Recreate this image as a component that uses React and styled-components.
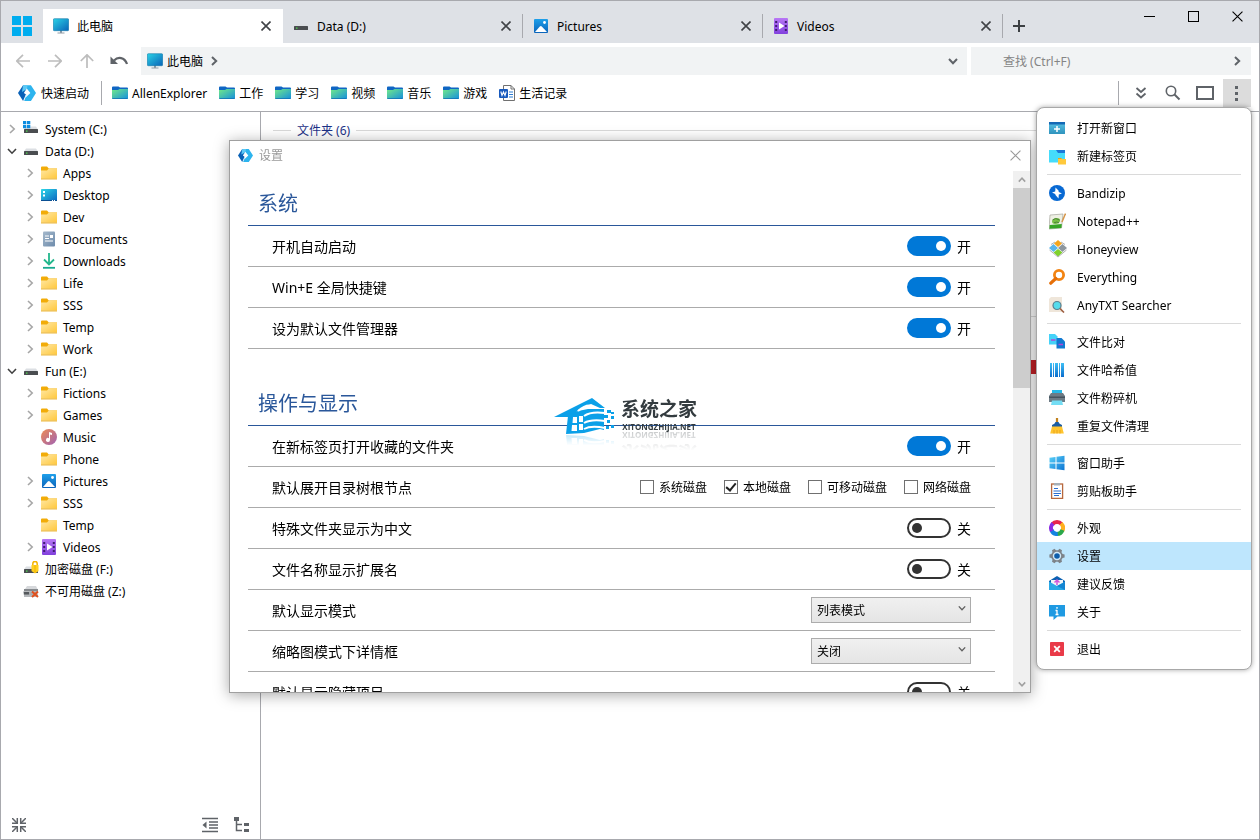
import React, { useState } from 'react';
import styled, { createGlobalStyle } from 'styled-components';

const GlobalStyle = createGlobalStyle`
  * {
    box-sizing: border-box;
  }

  body {
    margin: 0;
    background-color: #fff;
    overflow: hidden;
  }

  body, button, input, select {
    font-family: "Noto Sans", "Noto Sans CJK SC", sans-serif;
    font-size: 12px;
    line-height: 21px;
    color: #000;
  }

  button {
    border: 0;
    padding: 0;
    background: none;
    cursor: pointer;
  }

  svg {
    display: block;
    flex-shrink: 0;
  }
`;

const Window = styled.div`
  height: 100vh;
  display: flex;
  flex-direction: column;
  border: 1px solid #a8a9ae;
`;

const TitleBar = styled.header`
  display: flex;
  align-items: flex-start;
  height: 42px;
  background-color: #dee1e6;
`;

const StartButton = styled.button`
  display: flex;
  justify-content: center;
  width: 42px;
  padding-top: 15px;
`;

const Tabs = styled.nav`
  display: flex;
  flex: 1;
  padding-top: 8px;
`;

const Tab = styled.div`
  display: flex;
  align-items: center;
  width: 240px;
  height: 34px;
  padding: 0 9px 0 10px;
  background-color: ${props => props.$active ? '#fff' : 'transparent'};
`;

const TabLabel = styled.button`
  display: flex;
  align-items: center;
  flex: 1;
  gap: 8px;
`;

const TabDivider = styled.span`
  width: 1px;
  height: 24px;
  margin-left: -1px;
  align-self: center;
  background-color: #a8a9ae;
`;

const IconButton = styled.button`
  display: flex;
  align-items: center;
  justify-content: center;
  width: ${props => props.$width || 28}px;
  height: ${props => props.$height || 28}px;
  color: ${props => props.$color || '#5f6368'};
  background-color: ${props => props.$pressed ? '#dcdcdc' : 'transparent'};
`;

const WindowButtons = styled.div`
  display: flex;
`;

const AddressRow = styled.div`
  display: flex;
  align-items: center;
  height: 36px;
  padding: 0 8px 0 6px;
`;

const PathBox = styled.div`
  display: flex;
  align-items: center;
  justify-content: space-between;
  flex: 1;
  height: 28px;
  margin: 0 4px 0 6px;
  padding-left: 6px;
  background-color: #f1f3f4;
`;

const Crumb = styled.button`
  display: flex;
  align-items: center;
  gap: 4px;

  svg:last-child {
    margin-left: 2px;
    color: #5f6368;
  }
`;

const SearchBox = styled.div`
  display: flex;
  width: 280px;
  height: 28px;
  background-color: #f1f3f4;

  input {
    flex: 1;
    min-width: 0;
    border: 0;
    padding: 1px 0 0 32px;
    background: none;
  }

  input::placeholder {
    color: #858585;
  }
`;

const BookmarkRow = styled.div`
  display: flex;
  align-items: flex-start;
  height: 33px;
  padding: 0 8px 0 17px;
  border-bottom: 1px solid #a8a9ae;
`;

const Bookmarks = styled.nav`
  display: flex;
  align-items: center;
  flex: 1;
  gap: 12px;
  height: 28px;
`;

const Bookmark = styled.button`
  display: flex;
  align-items: center;
  gap: ${props => props.$gap || 4}px;
  white-space: nowrap;
`;

const BarDivider = styled.span`
  width: 1px;
  height: 24px;
  margin-right: ${props => props.$after}px;
  background-color: #a8a9ae;
`;

const Tools = styled.div`
  display: flex;
  align-items: center;
  gap: 4px;
`;

const MenuAnchor = styled.div`
  position: relative;
`;

const Menu = styled.div`
  position: absolute;
  z-index: 3;
  top: 100%;
  right: -1px;
  width: 216px;
  padding: 6px 0;
  border: 1px solid #a8a8a8;
  border-radius: 8px;
  background-color: #fff;
  box-shadow: 0 0 5px rgba(0, 0, 0, 0.35);

  hr {
    height: 1px;
    margin: 4px 10px;
    border: 0;
    background-color: #dadada;
  }
`;

const MenuItem = styled.button`
  display: grid;
  grid-template-columns: 16px 1fr;
  align-items: center;
  gap: 12px;
  width: 100%;
  height: 28px;
  padding: 0 12px;
  text-align: left;
  background-color: ${props => props.$selected ? '#bee6fd' : 'transparent'};
`;

const Main = styled.main`
  display: flex;
  flex: 1;
  min-height: 0;
`;

const Sidebar = styled.aside`
  display: flex;
  flex-direction: column;
  justify-content: space-between;
  width: 260px;
  border-right: 1px solid #a8a9ae;
`;

const Tree = styled.ul`
  list-style: none;
  margin: 0;
  padding: 6px 0 0;
`;

const TreeItem = styled.li`
  display: flex;
  align-items: center;
  height: 22px;
  padding-left: ${props => props.$child ? 22 : 4}px;
`;

const Expander = styled.button`
  display: flex;
  align-items: center;
  justify-content: center;
  width: 14px;
  height: 14px;
  margin-right: 4px;
  color: ${props => props.$open ? '#404040' : '#a6a6a6'};
`;

const TreeLabel = styled.span`
  margin-left: 6px;
`;

const SidebarTools = styled.div`
  display: flex;
  gap: 4px;
  padding: 0 4px;

  button:first-child {
    margin-right: auto;
  }
`;

const Files = styled.section`
  flex: 1;
  padding: 8px 20px 0 12px;
`;

const GroupHeading = styled.h2`
  display: flex;
  align-items: center;
  gap: 6px;
  height: 20px;
  margin: 0 0 ${props => props.$space || 0}px;
  color: #1e3287;
  font-size: 12px;
  font-weight: 400;

  &::before, &::after {
    content: "";
    height: 1px;
    background-color: #dadada;
  }

  &::before {
    width: 18px;
  }

  &::after {
    flex: 1;
  }
`;

const UsageBar = styled.div`
  width: 200px;
  height: 14px;
  margin: 34px 10px 0 auto;
  background-color: #c42127;
`;

const Overlay = styled.div`
  position: fixed;
  z-index: 2;
  inset: 0;
  display: grid;
  place-items: center;
  padding-bottom: 7px;
  pointer-events: none;
`;

const Dialog = styled.section`
  position: relative;
  display: flex;
  flex-direction: column;
  width: 802px;
  height: 553px;
  border: 1px solid #a0a0a0;
  background-color: #fff;
  box-shadow: 0 2px 14px rgba(0, 0, 0, 0.35);
  pointer-events: auto;
`;

const DialogTitle = styled.header`
  display: flex;
  align-items: center;
  gap: 6px;
  height: 30px;
  padding: 0 1px 2px 8px;
  color: #999;

  button {
    margin-left: auto;
  }
`;

const DialogBody = styled.div`
  display: flex;
  flex: 1;
  min-height: 0;
`;

const Settings = styled.div`
  flex: 1;
  padding: 0 18px;
  overflow: hidden;
`;

const SettingsGroup = styled.section`
  margin-bottom: 22px;
`;

const SettingsHeading = styled.h2`
  height: 55px;
  margin: 0;
  padding: 18px 10px 0;
  border-bottom: 1px solid #2a579a;
  color: #2a579a;
  font-size: 20px;
  font-weight: 400;
  line-height: 30px;
`;

const SettingRow = styled.div`
  display: flex;
  align-items: center;
  justify-content: space-between;
  height: 41px;
  padding: 0 24px;
  border-bottom: 1px solid #ababab;
  font-size: 14px;
`;

const SwitchLabel = styled.label`
  display: flex;
  align-items: center;
  gap: 6px;
`;

const SwitchInput = styled.input`
  appearance: none;
  display: flex;
  align-items: center;
  width: 44px;
  height: 20px;
  margin: 0;
  padding: 0 3px;
  border: 2px solid #333;
  border-radius: 10px;

  &::before {
    content: "";
    width: 10px;
    height: 10px;
    border-radius: 50%;
    background-color: #333;
  }

  &:checked {
    justify-content: flex-end;
    border-color: #0078d7;
    background-color: #0078d7;
  }

  &:checked::before {
    background-color: #fff;
  }
`;

const CheckGroup = styled.div`
  display: flex;
  gap: 17px;
`;

const CheckLabel = styled.label`
  display: flex;
  align-items: center;
  gap: 5px;
  font-size: 12px;
`;

const CheckInput = styled.input`
  appearance: none;
  display: flex;
  justify-content: center;
  width: 14px;
  height: 14px;
  margin: 0;
  border: 1px solid #707070;

  &:checked::before {
    content: "";
    width: 4px;
    height: 8px;
    border: solid #212121;
    border-width: 0 2px 2px 0;
    transform: rotate(40deg);
  }
`;

const SelectBox = styled.div`
  display: grid;
  width: 160px;
  color: #606060;

  select, svg {
    grid-area: 1 / 1;
  }

  select {
    appearance: none;
    height: 26px;
    padding: 1px 5px 0;
    border: 1px solid #acacac;
    border-radius: 0;
    background: linear-gradient(#f0f0f0, #e5e5e5);
  }

  svg {
    place-self: center end;
    margin: 0 5px 4px 0;
    pointer-events: none;
  }
`;

const ScrollBar = styled.div`
  display: flex;
  flex-direction: column;
  justify-content: space-between;
  width: 17px;
  background-color: #f0f0f0;
`;

const ScrollThumb = styled.div`
  height: 200px;
  margin-bottom: auto;
  background-color: #cdcdcd;
`;

const Watermark = styled.div`
  position: absolute;
  left: 324px;
  top: 256px;
  display: flex;
  align-items: flex-start;
  gap: 5px;
  pointer-events: none;

  svg {
    -webkit-box-reflect: below -1px linear-gradient(transparent 70%, rgba(0, 0, 0, 0.25));
  }
`;

const WatermarkText = styled.div`
  color: #333b3f;
  text-align: center;
  -webkit-box-reflect: below -4px linear-gradient(transparent 40%, rgba(0, 0, 0, 0.3));

  strong {
    display: block;
    font-size: 19px;
    line-height: 24px;
  }

  small {
    display: block;
    font-family: "Open Sans", sans-serif;
    font-size: 8px;
    font-weight: 700;
    line-height: 12px;
  }
`;

const svg = (size, children, viewBox = '0 0 16 16') => (
  <svg width={size} height={size} viewBox={viewBox} fill="none" aria-hidden="true">{children}</svg>
);

const Gradient = ({ id, from, to, flat }) => (
  <linearGradient id={id} x1="0" y1="0" x2={flat ? '0' : '1'} y2="1">
    <stop stopColor={from} />
    <stop offset="1" stopColor={to} />
  </linearGradient>
);

/* line glyphs, all drawn in the current colour */

const Chevron = ({ dir = 'right', size = 10, weight = 2 }) => {
  const points = {
    right: 'M3 1 L7.2 5 L3 9',
    down: 'M1 3 L5 7.2 L9 3',
    up: 'M1 7 L5 2.8 L9 7'
  };
  return svg(size, <path d={points[dir]} stroke="currentColor" strokeWidth={weight} />, '0 0 10 10');
};

const Cross = ({ size = 10, weight = 1 }) => (
  svg(size, <path d="M.5 .5 L9.5 9.5 M9.5 .5 L.5 9.5" stroke="currentColor" strokeWidth={weight} />, '0 0 10 10')
);

const Arrow = ({ turn = 0 }) => svg(14, (
  <path d="M7 .8 L.8 7 L7 13.2 M1 7 H14" stroke="currentColor" strokeWidth="1.7" transform={`rotate(${turn} 7 7)`} />
), '0 0 14 14');

const UndoGlyph = () => svg(18, (
  <>
    <path d="M0.5 4.5 V12 H8 Z" fill="currentColor" />
    <path d="M4 8.5 C8 4.5 14.5 5 17 12" stroke="currentColor" strokeWidth="2.2" />
  </>
), '0 0 18 18');

const PlusGlyph = () => svg(12, <path d="M6 0 V12 M0 6 H12" stroke="currentColor" strokeWidth="2" />, '0 0 12 12');

const MinGlyph = () => svg(11, <path d="M0 5.5 H11" stroke="currentColor" />, '0 0 11 11');

const MaxGlyph = () => svg(11, <rect x=".5" y=".5" width="10" height="10" stroke="currentColor" />, '0 0 11 11');

const DoubleDownGlyph = () => svg(12, (
  <path d="M1.5 1 L6 5 L10.5 1 M1.5 6.5 L6 10.5 L10.5 6.5" stroke="currentColor" strokeWidth="1.8" />
), '0 0 12 12');

const SearchGlyph = () => svg(16, (
  <>
    <circle cx="6" cy="6" r="4.7" stroke="currentColor" strokeWidth="1.6" />
    <path d="M9.5 9.5 L14.5 14.5" stroke="currentColor" strokeWidth="2" />
  </>
));

const PaneGlyph = () => svg(18, <rect x="1" y="3" width="16" height="12" stroke="currentColor" strokeWidth="2" />, '0 0 18 18');

const DotsGlyph = () => svg(16, <path d="M6 1 h3 v3 h-3z M6 7 h3 v3 h-3z M6 13 h3 v3 h-3z" fill="currentColor" />);

const ShrinkGlyph = () => svg(14, (
  <>
    <path d="M0 0 L5 5 M14 0 L9 5 M0 14 L5 9 M14 14 L9 9" stroke="currentColor" strokeWidth="1.5" />
    <path d="M0 5.3 H5.3 V0 M14 5.3 H8.7 V0 M0 8.7 H5.3 V14 M14 8.7 H8.7 V14" stroke="currentColor" strokeWidth="1.5" />
  </>
), '0 0 14 14');

const OutdentGlyph = () => svg(16, (
  <>
    <path d="M0 1.5 H16 M7 5 H16 M7 8 H16 M7 11 H16 M0 14.5 H16" stroke="currentColor" strokeWidth="1.5" />
    <path d="M4.5 4.5 V11.5 L.5 8 Z" fill="currentColor" />
  </>
));

const TreeGlyph = () => svg(16, (
  <>
    <path d="M0 0 h5 v4 h-5z M10 6 h5 v3 h-5z M10 12 h5 v3 h-5z" fill="currentColor" />
    <path d="M2.5 4 V13.5 H8 M2.5 7.5 H8" stroke="currentColor" strokeWidth="1.5" />
  </>
));

/* coloured icons */

const TilesIcon = () => svg(20, <path d="M0 0 h9 v9 h-9z M11 0 h9 v9 h-9z M0 11 h9 v9 h-9z M11 11 h9 v9 h-9z" fill="#00adef" />, '0 0 20 20');

const MonitorIcon = () => svg(16, (
  <>
    <defs><Gradient id="monitor" from="#2bd3e6" to="#0a63b8" /></defs>
    <path d="M7 12 h2 v2.5 h2.5 v1 h-7 v-1 H7z" fill="#8f9ba5" />
    <rect x=".3" y=".7" width="15.4" height="12" rx="1" fill="url(#monitor)" stroke="#1078a8" strokeWidth=".6" />
  </>
));

const Disk = () => (
  <>
    <path d="M3 5.5 h10 l2 3 H1z" fill="#dcdfe3" />
    <rect x="1" y="8" width="14" height="4" rx=".5" fill="#4a4d50" />
    <rect x="3" y="9.5" width="1.5" height="1.2" fill="#4ee04e" />
  </>
);

const DriveIcon = () => svg(16, <Disk />);

const SystemDriveIcon = () => svg(16, (
  <>
    <Disk />
    <path d="M0 0 h3.3 v3.3 h-3.3z M4 0 h3.3 v3.3 H4z M0 4 h3.3 v3.3 h-3.3z M4 4 h3.3 v3.3 H4z" fill="#0d8ce0" />
  </>
));

const LockedDriveIcon = () => svg(16, (
  <>
    <Disk />
    <path d="M9.8 5 V2.8 a2.2 2.4 0 0 1 4.4 0 V5" stroke="#f4b400" strokeWidth="1.5" />
    <path d="M8.5 4 h7 v6 l-3.5 2.5 l-3.5 -2.5z" fill="#ffd020" />
    <path d="M12 4 v8" stroke="#f3b200" />
  </>
));

const BrokenDriveIcon = () => svg(16, (
  <>
    <path d="M4 3 h9 l1.5 3 H2z" fill="#d6d8db" />
    <path d="M1 6 h14 v2.5 H1z" fill="#85898d" />
    <path d="M0 8.5 h14 l1 4 H1z" fill="#a9adb0" />
    <path d="M1 9 h5 v2.5 H1z" fill="#55595d" />
    <path d="M1 12 h14 v2 H1z" fill="#b5b8bb" />
    <path d="M9 8.5 l6 5.5 M15 8.5 l-6 5.5" stroke="#e0501e" strokeWidth="2" />
  </>
));

const FolderIcon = () => svg(16, (
  <>
    <defs><Gradient id="folder" from="#ffe8a6" to="#ffc83d" /></defs>
    <path d="M0 2.5 q0 -1 1 -1 h5 l1.8 2 H16 V8 H0z" fill="#f2ac08" />
    <path d="M0 5.5 h6 l1.8 -2 H16 V13.5 H0z" fill="url(#folder)" />
    <path d="M0 13.5 H16 v.9 H0z" fill="#e5a50d" />
  </>
));

const MarkFolderIcon = () => svg(16, (
  <>
    <defs><Gradient id="mark" from="#72ea88" to="#158fdc" /></defs>
    <path d="M0 2.5 q0 -1 1 -1 h5.5 l1.5 1 H15 q1 0 1 1 V7 H0z" fill="#0f66c3" />
    <path d="M0 5 h6 l1.5 -1 H16 V13.2 q0 .8 -1 .8 H1 q-1 0 -1 -.8z" fill="url(#mark)" />
    <path d="M0 13.2 H16 q0 .8 -1 .8 H1 q-1 0 -1 -.8z" fill="#1170b5" />
  </>
));

const DesktopIcon = () => svg(16, (
  <>
    <defs><Gradient id="desktop" from="#2dd8e8" to="#0c66c0" /></defs>
    <rect y="2" width="16" height="12" rx=".8" fill="url(#desktop)" />
    <path d="M2 4 h2 v2 H2z M2 7.5 h2 v2 H2z" fill="#fff" />
    <path d="M0 13 h16 v1 H0z" fill="#0a4f92" />
    <path d="M11 13 h1 v1 h-1z M13 13 h1 v1 h-1z" fill="#fff" />
  </>
));

const DocumentsIcon = () => svg(16, (
  <>
    <defs><Gradient id="docs" from="#a5b9cc" to="#6d8bab" /></defs>
    <rect x="2" y=".5" width="12" height="15" rx="1" fill="url(#docs)" />
    <path d="M4 5 h4 M4 7.5 h4 M4 10 h8" stroke="#fff" strokeWidth="1.2" />
    <rect x="9" y="4" width="3" height="3" fill="#fff" />
  </>
));

const DownloadsIcon = () => svg(16, (
  <>
    <path d="M8 0 V11 M3 6.5 L8 11.5 L13 6.5" stroke="#23b78c" strokeWidth="1.8" />
    <path d="M2 14.8 H14" stroke="#17a98f" strokeWidth="1.8" />
  </>
));

const MusicIcon = () => svg(16, (
  <>
    <defs><Gradient id="music" from="#ee8b52" to="#a062b4" /></defs>
    <circle cx="8" cy="8" r="8" fill="url(#music)" />
    <path d="M8 3 l3 1 v2 l-2 -.5 V11 a2 2 0 1 1 -1 -1.8z" fill="#fff" />
  </>
));

const PicturesIcon = () => svg(16, (
  <>
    <defs><Gradient id="pics" from="#1fa0ea" to="#0a63ba" flat /></defs>
    <rect x="1" y="1" width="14" height="14" rx="1" fill="url(#pics)" />
    <path d="M2 14 L6.8 8.5 q1 -1 2 0 L14 14z" fill="#fff" />
    <circle cx="11.5" cy="4.5" r="1.4" fill="#fff" />
  </>
));

const VideosIcon = () => svg(16, (
  <>
    <defs><Gradient id="video" from="#b877f5" to="#8140dd" flat /></defs>
    <rect x="1" y="0" width="14" height="16" rx="1" fill="url(#video)" />
    <path d="M2.2 3 h2 v2 h-2z M2.2 7 h2 v2 h-2z M2.2 11 h2 v2 h-2z M11.8 3 h2 v2 h-2z M11.8 7 h2 v2 h-2z M11.8 11 h2 v2 h-2z" fill="#3f1d72" />
    <path d="M6 4.5 L11.5 8 L6 11.5z" fill="#fff" />
  </>
));

const AppIcon = ({ size = 16 }) => svg(size, (
  <>
    <path d="M4.5 1 H11.5 L16 8 L11.5 15 H5.5 L8 8 z" fill="#2db4ee" />
    <path d="M4.5 1 L0 8 L4.5 15 L7 9 L8 4.5z" fill="#0961b7" />
    <path d="M4.5 1 H8.5 L8 4.5 L3.5 7z" fill="#5cc8f5" />
    <path d="M7.8 4 L11 8 L6.3 12.5 L7.5 9.5 L5.2 8z" fill="#fff" />
  </>
));

const WordIcon = () => svg(16, (
  <>
    <path d="M4.5 .5 H12 L15.5 4 V15.5 H4.5z M12 .5 V4 H15.5" fill="#fff" stroke="#707070" />
    <path d="M10 7 h4 M10 9.5 h4 M10 12 h4" stroke="#2b7cd3" />
    <rect y="4" width="9" height="9" rx="1" fill="#185abd" />
    <path d="M1.8 6.5 L3 10.5 L4.5 7 L6 10.5 L7.2 6.5" stroke="#fff" strokeWidth="1.1" />
  </>
));

const NewWindowIcon = () => svg(16, (
  <>
    <defs><Gradient id="newwin" from="#5bc3e6" to="#2f93bd" flat /></defs>
    <rect y="2" width="16" height="12" rx=".5" fill="url(#newwin)" />
    <path d="M0 2 h16 v2.5 H0z" fill="#1569b5" />
    <path d="M8 6 v6 M5 9 h6" stroke="#fff" strokeWidth="1.5" />
  </>
));

const NewTabIcon = () => svg(17, (
  <>
    <path d="M0 2 h16 v12.5 H0z" fill="#45dcfb" />
    <path d="M7 2 h9 v3 H9z" fill="#1b78d8" />
    <path d="M9 10 h3 l1 1 h4 V16.5 H9z" fill="#ffc93c" />
    <path d="M9 10 h3 l1 1 h-4z" fill="#e9a11a" />
  </>
), '0 0 17 17');

const BandizipIcon = () => svg(16, (
  <>
    <circle cx="8" cy="8" r="8" fill="#0869d3" />
    <path d="M6.5 2.5 L9.5 5.5 L9.8 7 L13 8.5 L9.8 9.5 L9.5 13.5 L6.5 10 L6.2 9 L3 7.5 L6.2 6.5z" fill="#fff" />
  </>
));

const NotepadIcon = () => svg(17, (
  <>
    <path d="M1 2 L14 1 L12.5 15 L0 16z" fill="#eef0e4" stroke="#a5a59c" strokeWidth=".7" />
    <path d="M.7 12 L12.8 11 L12.4 15 L.3 15.8z" fill="#35a424" />
    <path d="M3 8.5 q.5 -3.5 4.5 -3.5 q4 0 3.5 3 q-1 3 -4.5 3 q-3.5 0 -3.5 -2.5z" fill="#77c043" />
    <path d="M3.5 7 q3 -3 7 0 M5 9.8 q3 -1.5 5 0" stroke="#4a7a3a" strokeWidth=".9" />
    <path d="M16.5 .5 L13 9" stroke="#d6964a" strokeWidth="1.5" />
  </>
), '0 0 17 17');

const HoneyviewIcon = () => svg(18, (
  <>
    <path d="M9 0 L13 3.5 L9 7 L5 3.5z" fill="#f5a61d" />
    <path d="M4.5 4 L9 8 L4.5 12 L0 8z" fill="#59b5ea" />
    <path d="M13.5 4 L18 8 L13.5 12 L9 8z" fill="#8e979e" />
    <path d="M9 9 L13.5 12.5 L9 16.5 L4.5 12.5z" fill="#80d12c" />
    <path d="M2 4.5 L6 2 M16 4.5 L12 2 M.5 10 L9 17 L17.5 10" stroke="#b0b0b0" />
  </>
), '0 0 18 18');

const EverythingIcon = () => svg(16, (
  <>
    <circle cx="10" cy="6" r="4.6" stroke="#f28312" strokeWidth="2.8" />
    <path d="M6.8 9.5 L1.8 14.2" stroke="#e66f08" strokeWidth="3.2" strokeLinecap="round" />
  </>
));

const AnyTxtIcon = () => svg(16, (
  <>
    <path d="M0 2 L2 0 H13 V15 H0z" fill="#efe6da" />
    <circle cx="8" cy="8.5" r="4" fill="#55dcec" stroke="#5c7f90" strokeWidth="1.2" />
    <path d="M11 11.5 L15 15.5" stroke="#9d5d3f" strokeWidth="1.6" />
  </>
));

const CompareIcon = () => svg(16, (
  <>
    <path d="M0 0 h6 l2.5 2.5 V10.5 H0z" fill="#45d2f8" />
    <path d="M7.5 4 h5 L16 7.5 V14.5 H7.5z" fill="#1179d2" />
    <path d="M2 6 h4.5 M9.5 10.5 h4.5" stroke="#b246d6" strokeWidth="1.4" />
  </>
));

const HashIcon = () => svg(16, (
  <>
    <defs><Gradient id="bars" from="#3fc0f6" to="#0b6dcd" flat /></defs>
    <path d="M1 1 h2 v14 H1z M4 1 h1 v14 H4z M6 1 h3 v14 H6z M10 1 h1 v14 h-1z M12 1 h3 v14 h-3z" fill="url(#bars)" />
  </>
));

const ShredIcon = () => svg(16, (
  <>
    <path d="M3 0 h10 v4 H3z" fill="#26b8e6" />
    <path d="M2 3 h12 l2 3 v6 H0 V6z" fill="#6d7b85" />
    <path d="M0 6.5 h16 v1.5 H0z" fill="#46545e" />
    <path d="M3 10.5 h10 l1 4.5 H2z" fill="#74ddf4" />
  </>
));

const BroomIcon = () => svg(16, (
  <>
    <path d="M8 0 V5" stroke="#c1811d" strokeWidth="2.2" />
    <path d="M6.5 4 h3 q.5 2 3.5 3 v2 H3 V7 q3 -1 3.5 -3z" fill="#1c5da3" />
    <path d="M3 8.5 h10 l1.8 7 H1.2z" fill="#ffc52f" />
    <path d="M5 12 v3.5 M8 12 v3.5 M11 12 v3.5" stroke="#eaa41c" />
  </>
));

const WindowsIcon = () => svg(16, (
  <>
    <defs><Gradient id="win" from="#5bd2f8" to="#0c75d4" /></defs>
    <path d="M.5 2.8 L6.5 2 V7.6 H.5z M7.5 1.8 L15.5 .8 V7.6 H7.5z M.5 8.4 H6.5 V14 L.5 13.2z M7.5 8.4 H15.5 V15.2 L7.5 14.2z" fill="url(#win)" />
  </>
));

const ClipboardIcon = () => svg(16, (
  <>
    <rect x="2.6" y="1" width="11" height="14.4" fill="#fff" stroke="#b7683d" strokeWidth="1.3" />
    <rect x="5" y="0" width="6" height="2.5" fill="#a7b0b8" />
    <path d="M5 5.5 h4 M4.5 8 h7.5 M4.5 10.5 h7.5 M5 12.5 h5" stroke="#2a6dd0" strokeWidth="1.1" />
  </>
));

const PaletteIcon = () => svg(16, (
  <g strokeWidth="4">
    <path d="M3.5 4.1 A6 6 0 0 1 12.5 4" stroke="#e6254d" />
    <path d="M12 3.5 A6 6 0 0 1 13.3 10.8" stroke="#ffb01f" />
    <path d="M13.5 10 A6 6 0 0 1 8 14" stroke="#2ba84a" />
    <path d="M8.8 14 A6 6 0 0 1 2.5 10" stroke="#1483e0" />
    <path d="M2.8 11 A6 6 0 0 1 4 3.5" stroke="#8a2be2" />
  </g>
));

const GearIcon = () => svg(16, (
  <>
    <path d="M5.5 .8 L7 2.2 H9 L10.5 .8 L13 2.2 L12.5 4.2 L13.6 6 L15.6 6.5 V9.5 L13.6 10 L12.5 11.8 L13 13.8 L10.5 15.2 L9 13.8 H7 L5.5 15.2 L3 13.8 L3.5 11.8 L2.4 10 L.4 9.5 V6.5 L2.4 6 L3.5 4.2 L3 2.2z" fill="#7d8389" />
    <circle cx="8" cy="8" r="3.5" fill="#0d5eab" stroke="#d2eaf9" strokeWidth="1.4" />
  </>
));

const FeedbackIcon = () => svg(16, (
  <>
    <path d="M0 5 L8 0 L16 5 V14 H0z" fill="#0b61b2" />
    <path d="M2 4 h12 v7 H2z" fill="#f2f4f8" />
    <path d="M8 4 v5 M5.5 6.5 L8 4 L10.5 6.5" stroke="#d056d8" strokeWidth="1.5" />
    <path d="M0 5.5 L8 10 L16 5.5 V14 H0z" fill="#2aa9e6" />
    <path d="M16 14 V6 L8 10z" fill="#1385d2" />
  </>
));

const AboutIcon = () => svg(16, (
  <>
    <path d="M0 1 H16 V12.5 H8.5 L4.5 16 V12.5 H0z" fill="#1f9ae2" />
    <path d="M8 3 v1.8 M8 6 v5 M6.5 6.5 H8 M6.5 10.5 h3" stroke="#fff" strokeWidth="1.3" />
  </>
));

const ExitIcon = () => svg(16, (
  <>
    <rect x="1" y="1" width="14" height="14" rx=".8" fill="#e93a48" />
    <path d="M5.2 5.2 L10.8 10.8 M10.8 5.2 L5.2 10.8" stroke="#fff" strokeWidth="1.8" />
  </>
));

const HouseLogo = () => (
  <svg width="62" height="38" viewBox="0 0 62 38" fill="#0ba0e8" aria-hidden="true">
    <path d="M0 20 L38 1 L51 11 H46 L37 7 L24 13 L19 20z" />
    <path d="M14 19 L24 14 L34 12 L50 12 V33 L46 32 L30 36 L12 37z" />
    <path d="M19 20 h4 v6 h-4.500z M25 19 h4 v6 h-4z M18 28 h5 v6 h-5.500z M25 27 h4 v6 h-4z" fill="#fff" />
    <path d="M24 14 q8 -7 14 -5 M30 19 q7 -5 21 -3 M30 26 q7 -4 21 -2 M30 32 q7 -4 21 -1" fill="none" stroke="#fff" strokeWidth="2" />
    <path d="M53 13 h4 v3 h-4z M50 18 h4 v3 h-4z M57 19 h3 v3 h-3z M53 23 h3 v3 h-3z M57 28 h3 v3 h-3z M52 29 h3 v3 h-3z M57 15 h3 v2 h-3z" />
  </svg>
);

const tabs = [
  { name: '此电脑', icon: MonitorIcon },
  { name: 'Data (D:)', icon: DriveIcon },
  { name: 'Pictures', icon: PicturesIcon },
  { name: 'Videos', icon: VideosIcon }
];

const bookmarks = ['AllenExplorer', '工作', '学习', '视频', '音乐', '游戏'];

const tree = [
  { name: 'System (C:)', icon: SystemDriveIcon, arrow: 'right' },
  { name: 'Data (D:)', icon: DriveIcon, arrow: 'down' },
  { name: 'Apps', arrow: 'right', child: true },
  { name: 'Desktop', icon: DesktopIcon, arrow: 'right', child: true },
  { name: 'Dev', arrow: 'right', child: true },
  { name: 'Documents', icon: DocumentsIcon, arrow: 'right', child: true },
  { name: 'Downloads', icon: DownloadsIcon, arrow: 'right', child: true },
  { name: 'Life', arrow: 'right', child: true },
  { name: 'SSS', arrow: 'right', child: true },
  { name: 'Temp', arrow: 'right', child: true },
  { name: 'Work', arrow: 'right', child: true },
  { name: 'Fun (E:)', icon: DriveIcon, arrow: 'down' },
  { name: 'Fictions', arrow: 'right', child: true },
  { name: 'Games', arrow: 'right', child: true },
  { name: 'Music', icon: MusicIcon, child: true },
  { name: 'Phone', child: true },
  { name: 'Pictures', icon: PicturesIcon, arrow: 'right', child: true },
  { name: 'SSS', arrow: 'right', child: true },
  { name: 'Temp', child: true },
  { name: 'Videos', icon: VideosIcon, arrow: 'right', child: true },
  { name: '加密磁盘 (F:)', icon: LockedDriveIcon },
  { name: '不可用磁盘 (Z:)', icon: BrokenDriveIcon }
];

const menu = [
  [['打开新窗口', NewWindowIcon], ['新建标签页', NewTabIcon]],
  [
    ['Bandizip', BandizipIcon],
    ['Notepad++', NotepadIcon],
    ['Honeyview', HoneyviewIcon],
    ['Everything', EverythingIcon],
    ['AnyTXT Searcher', AnyTxtIcon]
  ],
  [
    ['文件比对', CompareIcon],
    ['文件哈希值', HashIcon],
    ['文件粉碎机', ShredIcon],
    ['重复文件清理', BroomIcon]
  ],
  [['窗口助手', WindowsIcon], ['剪贴板助手', ClipboardIcon]],
  [
    ['外观', PaletteIcon],
    ['设置', GearIcon],
    ['建议反馈', FeedbackIcon],
    ['关于', AboutIcon]
  ],
  [['退出', ExitIcon]]
];

const SwitchRow = ({ label, on = false }) => {
  const [checked, setChecked] = useState(on);

  return (
    <SettingRow>
      <span>{label}</span>
      <SwitchLabel>
        <SwitchInput
          type="checkbox"
          role="switch"
          aria-label={label}
          checked={checked}
          onChange={e => setChecked(e.target.checked)}
        />
        {checked ? '开' : '关'}
      </SwitchLabel>
    </SettingRow>
  );
};

const SelectRow = ({ id, label, value }) => (
  <SettingRow>
    <label htmlFor={id}>{label}</label>
    <SelectBox>
      <select id={id} defaultValue={value}>
        <option>{value}</option>
      </select>
      <Chevron dir="down" size={8} weight={1.7} />
    </SelectBox>
  </SettingRow>
);

const SettingsDialog = () => (
  <Overlay>
    <Dialog role="dialog" aria-label="设置">
      <DialogTitle>
        <AppIcon size={15} />
        设置
        <IconButton $color="#999" aria-label="关闭"><Cross size={11} /></IconButton>
      </DialogTitle>
      <DialogBody>
        <Settings>
          <SettingsGroup>
            <SettingsHeading>系统</SettingsHeading>
            <SwitchRow label="开机自动启动" on />
            <SwitchRow label="Win+E 全局快捷键" on />
            <SwitchRow label="设为默认文件管理器" on />
          </SettingsGroup>
          <SettingsGroup>
            <SettingsHeading>操作与显示</SettingsHeading>
            <SwitchRow label="在新标签页打开收藏的文件夹" on />
            <SettingRow>
              <span>默认展开目录树根节点</span>
              <CheckGroup>
                {['系统磁盘', '本地磁盘', '可移动磁盘', '网络磁盘'].map(name => (
                  <CheckLabel key={name}>
                    <CheckInput type="checkbox" defaultChecked={name === '本地磁盘'} />
                    {name}
                  </CheckLabel>
                ))}
              </CheckGroup>
            </SettingRow>
            <SwitchRow label="特殊文件夹显示为中文" />
            <SwitchRow label="文件名称显示扩展名" />
            <SelectRow id="view-mode" label="默认显示模式" value="列表模式" />
            <SelectRow id="detail-pane" label="缩略图模式下详情框" value="关闭" />
            <SwitchRow label="默认显示隐藏项目" />
          </SettingsGroup>
        </Settings>
        <ScrollBar>
          <IconButton $width={17} $height={17} $color="#a0a0a0" aria-label="向上"><Chevron dir="up" size={8} /></IconButton>
          <ScrollThumb />
          <IconButton $width={17} $height={17} $color="#a0a0a0" aria-label="向下"><Chevron dir="down" size={8} /></IconButton>
        </ScrollBar>
      </DialogBody>
      <Watermark>
        <HouseLogo />
        <WatermarkText>
          <strong>系统之家</strong>
          <small>XITONGZHIJIA.NET</small>
        </WatermarkText>
      </Watermark>
    </Dialog>
  </Overlay>
);

const MoreMenu = () => (
  <Menu role="menu">
    {menu.map((group, index) => (
      <React.Fragment key={index}>
        {index > 0 && <hr />}
        {group.map(([name, Icon]) => (
          <MenuItem key={name} role="menuitem" $selected={name === '设置'}>
            <Icon />
            {name}
          </MenuItem>
        ))}
      </React.Fragment>
    ))}
  </Menu>
);

const App = () => (
  <>
    <GlobalStyle />
    <Window>
      <TitleBar>
        <StartButton aria-label="开始"><TilesIcon /></StartButton>
        <Tabs>
          {tabs.map(({ name, icon: Icon }, index) => (
            <React.Fragment key={name}>
              <Tab $active={index === 0}>
                <TabLabel><Icon />{name}</TabLabel>
                <IconButton $width={16} $height={16} $color="#404347" aria-label="关闭标签页"><Cross weight={1.6} /></IconButton>
              </Tab>
              {index > 0 && <TabDivider />}
            </React.Fragment>
          ))}
          <IconButton $width={32} $height={34} $color="#3c4043" aria-label="新标签页"><PlusGlyph /></IconButton>
        </Tabs>
        <WindowButtons>
          <IconButton $width={44} $height={31} $color="#000" aria-label="最小化"><MinGlyph /></IconButton>
          <IconButton $width={44} $height={31} $color="#000" aria-label="最大化"><MaxGlyph /></IconButton>
          <IconButton $width={44} $height={31} $color="#000" aria-label="关闭窗口"><Cross size={11} /></IconButton>
        </WindowButtons>
      </TitleBar>
      <AddressRow>
        <IconButton $width={32} $color="#bdbdbd" aria-label="后退"><Arrow /></IconButton>
        <IconButton $width={32} $color="#bdbdbd" aria-label="前进"><Arrow turn={180} /></IconButton>
        <IconButton $width={32} $color="#bdbdbd" aria-label="上一级"><Arrow turn={90} /></IconButton>
        <IconButton $width={32} aria-label="撤销"><UndoGlyph /></IconButton>
        <PathBox>
          <Crumb><MonitorIcon />此电脑<Chevron /></Crumb>
          <IconButton aria-label="历史记录"><Chevron dir="down" /></IconButton>
        </PathBox>
        <SearchBox>
          <input type="text" aria-label="查找" placeholder="查找 (Ctrl+F)" />
          <IconButton aria-label="搜索"><Chevron /></IconButton>
        </SearchBox>
      </AddressRow>
      <BookmarkRow>
        <Bookmarks>
          <Bookmark $gap={5}><AppIcon size={18} />快速启动</Bookmark>
          <BarDivider $after={-2} />
          {bookmarks.map(name => (
            <Bookmark key={name}><MarkFolderIcon />{name}</Bookmark>
          ))}
          <Bookmark><WordIcon />生活记录</Bookmark>
        </Bookmarks>
        <Tools>
          <BarDivider $after={4} />
          <IconButton aria-label="展开"><DoubleDownGlyph /></IconButton>
          <IconButton aria-label="搜索文件"><SearchGlyph /></IconButton>
          <IconButton aria-label="窗格"><PaneGlyph /></IconButton>
          <MenuAnchor>
            <IconButton $pressed aria-label="更多"><DotsGlyph /></IconButton>
            <MoreMenu />
          </MenuAnchor>
        </Tools>
      </BookmarkRow>
      <Main>
        <Sidebar>
          <Tree>
            {tree.map(({ name, icon: Icon = FolderIcon, arrow, child }, index) => (
              <TreeItem key={index} $child={child}>
                <Expander $open={arrow === 'down'} aria-label={name}>
                  {arrow && <Chevron dir={arrow} weight={1.6} />}
                </Expander>
                <Icon />
                <TreeLabel>{name}</TreeLabel>
              </TreeItem>
            ))}
          </Tree>
          <SidebarTools>
            <IconButton aria-label="全部折叠"><ShrinkGlyph /></IconButton>
            <IconButton aria-label="列表"><OutdentGlyph /></IconButton>
            <IconButton aria-label="目录树"><TreeGlyph /></IconButton>
          </SidebarTools>
        </Sidebar>
        <Files>
          <GroupHeading $space={166}>文件夹 (6)</GroupHeading>
          <GroupHeading />
          <UsageBar />
        </Files>
      </Main>
    </Window>
    <SettingsDialog />
  </>
);

export default App;
